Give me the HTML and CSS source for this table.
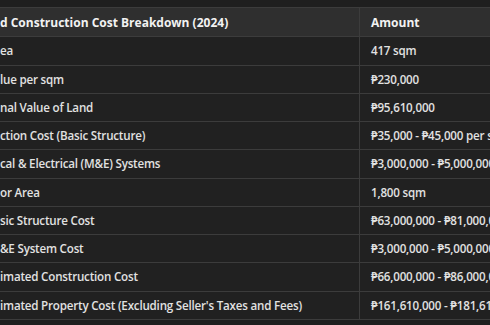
FILE: index.html
```html
<!DOCTYPE html>
<html lang="en">
  <head>
    <meta charset="UTF-8" />
    <meta name="viewport" content="width=device-width, initial-scale=1.0" />
    <title>Cost Breakdown</title>
    <link rel="stylesheet" href="styles.css">
  </head>
  <body>
    <div class="viewport">
      <table class="cost-table">
        <thead>
          <tr>
            <th class="label">d Construction Cost Breakdown (2024)</th>
            <th class="value">Amount</th>
          </tr>
        </thead>
        <tbody>
          <tr><td class="label">ea</td><td class="value">417 sqm</td></tr>
          <tr><td class="label">lue per sqm</td><td class="value">₱230,000</td></tr>
          <tr><td class="label">nal Value of Land</td><td class="value">₱95,610,000</td></tr>
          <tr><td class="label">ction Cost (Basic Structure)</td><td class="value">₱35,000 - ₱45,000 per sqm</td></tr>
          <tr><td class="label">cal &amp; Electrical (M&amp;E) Systems</td><td class="value">₱3,000,000 - ₱5,000,000</td></tr>
          <tr><td class="label">or Area</td><td class="value">1,800 sqm</td></tr>
          <tr><td class="label">sic Structure Cost</td><td class="value">₱63,000,000 - ₱81,000,000</td></tr>
          <tr><td class="label">&amp;E System Cost</td><td class="value">₱3,000,000 - ₱5,000,000</td></tr>
          <tr><td class="label">imated Construction Cost</td><td class="value">₱66,000,000 - ₱86,000,000</td></tr>
          <tr><td class="label">imated Property Cost (Excluding Seller's Taxes and Fees)</td><td class="value">₱161,610,000 - ₱181,610,000</td></tr>
        </tbody>
      </table>
    </div>
  </body>
</html>
```

FILE: styles.css
```css
body {
  margin: 0;
  padding: 0;
  background-color: #1f1f1f;
  color: #e2e2e2;
  font-family: "Open Sans", "Noto Sans", sans-serif;
  font-size: 11.6px;
  letter-spacing: -0.2px;
  overflow: hidden;
}
.viewport {
  width: 490px;
  height: 325px;
  overflow: hidden;
  padding-top: 7px;
  box-sizing: border-box;
}
.cost-table {
  border-collapse: collapse;
  width: 620px;
  table-layout: fixed;
  white-space: nowrap;
}
.cost-table th,
.cost-table td {
  padding: 4px 11px;
  line-height: 19.25px;
  border: 1px solid #3c3c3c;
  text-align: left;
  overflow: hidden;
}
.cost-table th {
  padding-top: 5px;
  background-color: #2f2f2f;
  color: #f2f2f2;
  font-size: 12px;
  font-weight: 700;
  letter-spacing: 0;
}
.cost-table td {
  background-color: #212121;
  font-weight: 600;
}
.cost-table .label {
  width: 348px;
  padding-left: 0;
  border-left: none;
}
```
